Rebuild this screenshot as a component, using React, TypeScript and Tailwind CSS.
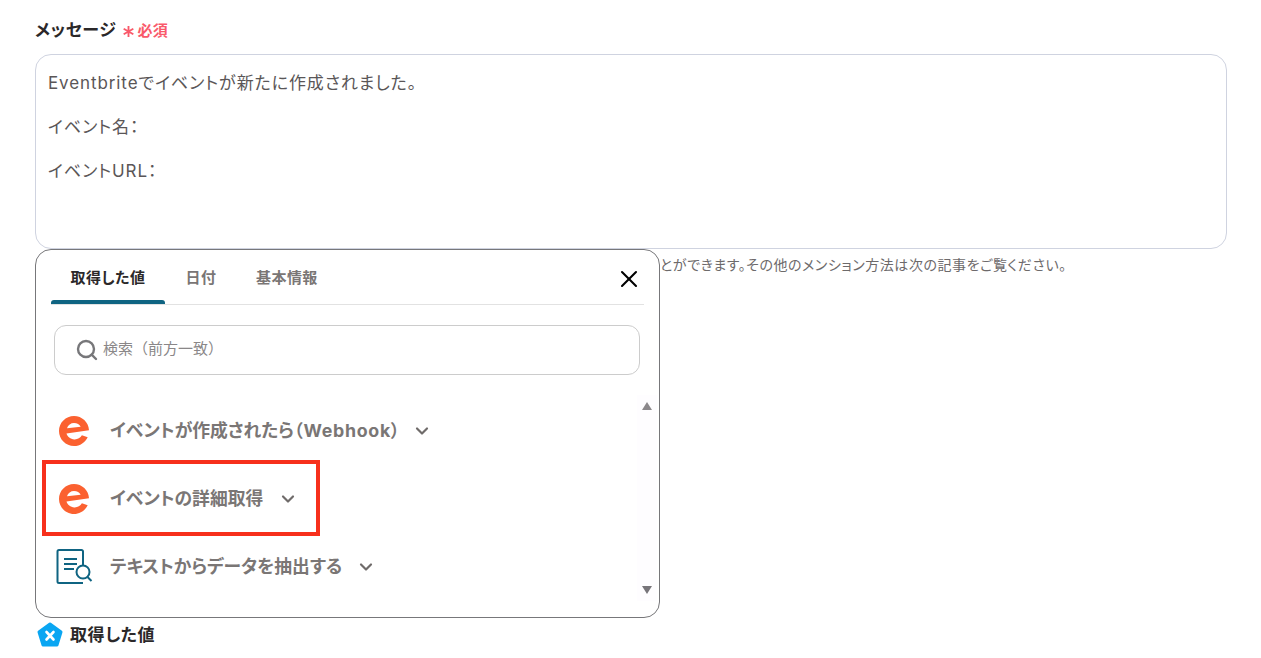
import { ChevronDown, Search, X } from "lucide-react";

function EventbriteLogo() {
  return (
    <svg width="32" height="32" viewBox="0 0 32 32" className="flex-none">
      <path
        d="M16 1C7.700 1 1 7.700 1 16s6.700 15 15 15c6.100 0 11.300-3.600 13.700-8.800l-5.800-1.900c-1.600 2.700-4.500 4.300-7.600 4.100-3.900-.2-6.800-2.600-7.800-5.900L31 15.200C30.600 7.200 24 1 16 1z"
        fill="#fb6130"
      />
      <path d="M9 13.200c1-3.200 3.800-5.200 7-5.200 3.100 0 5.600 1.700 6.700 3.800z" fill="#fff" />
    </svg>
  );
}

function DocSearchIcon() {
  return (
    <svg width="38" height="38" viewBox="0 0 38 38" fill="none" stroke="#0f6482" strokeWidth="2" className="flex-none">
      <path d="M28 35H4a1.500 1.500 0 0 1-1.500-1.500V3.500A1.500 1.500 0 0 1 4 2h22.500A1.500 1.500 0 0 1 28 3.500V17" />
      <path d="M9 11h13M9 16h13M9 21h10" />
      <circle cx="28" cy="24" r="6.500" />
      <path d="M32.500 29l4 4" />
    </svg>
  );
}

function Row({ icon, label, textWidth }: { icon: React.ReactNode; label: React.ReactNode; textWidth: string }) {
  return (
    <div className="flex h-[68px] items-center">
      <div className="flex w-[74px] flex-none justify-center pl-[2px]">{icon}</div>
      <span className={`text-[17.800px] leading-[24px] font-bold whitespace-nowrap text-[#7a7675] ${textWidth}`}>{label}</span>
      <ChevronDown size={20} strokeWidth={2.6} className="ml-[9px] flex-none text-[#6f6b6a]" />
    </div>
  );
}

export default function App() {
  return (
    <div className="relative h-[658px] w-[1261px] overflow-hidden bg-white px-[35px] pt-[19px] font-['Inter','Noto_Sans_CJK_JP',sans-serif] [font-feature-settings:'palt']">
      <div className="flex h-[24px] items-center">
        <span className="text-[17px] font-bold tracking-[0.6px] text-[#2b2829]">メッセージ</span>
        <svg width="13" height="13" viewBox="0 0 14 14" stroke="#f9596a" strokeWidth="2" className="ml-[5px] flex-none">
          <path d="M7 1v12M1.800 4l10.400 6M12.200 4 1.800 10" />
        </svg>
        <span className="ml-[3px] text-[15px] font-bold tracking-[0.3px] text-[#f9596a]">必須</span>
      </div>

      <div className="mt-[11px] flex h-[195px] w-[1192px] flex-col gap-[22px] rounded-[16px] border border-[#cfd3e0] px-[12px] pt-[17px] text-[17px] leading-[22px] tracking-[0.9px] text-[#5a5657]">
        <p>Eventbriteでイベントが新たに作成されました。</p>
        <p>イベント名：</p>
        <p>イベントURL：</p>
      </div>

      <p className="mt-[7px] pl-[625px] text-[14px] leading-[18px] tracking-[0.55px] text-[#6d6a6b]">
        とができます。その他のメンション方法は次の記事をご覧ください。
      </p>

      {/* mention popup */}
      <div className="absolute top-[249px] left-[35px] h-[369px] w-[625px] rounded-[16px] border border-[#77777a] bg-white">
        <div className="relative mx-[15px] flex h-[55px] border-b border-[#e2e2e2] pt-[17px] text-[15px] leading-[22px] font-bold tracking-[0.45px] text-[#7a7675]">
          <div className="relative w-[114px] text-center text-[#2b2829]">
            取得した値
            <span className="absolute right-0 bottom-0 left-0 h-[4px] rounded-t-[3px] bg-[#0f6482]" />
          </div>
          <div className="w-[72px] text-center">日付</div>
          <div className="ml-[19px]">基本情報</div>
          <X size={28} strokeWidth={1.8} className="absolute top-[15px] right-[1px] text-black" />
        </div>

        <div className="mx-[18px] mt-[20px] flex h-[50px] w-[586px] items-center rounded-[12px] border border-[#cccccc] pl-[20px]">
          <Search size={24} strokeWidth={2.400} className="text-[#77777a]" />
          <span className="mb-[2px] ml-[4px] text-[15px] leading-[20px] text-[#8a8788] [font-feature-settings:normal]">検索（前方一致）</span>
        </div>

        <div className="mt-[22px]">
          <Row
            icon={<EventbriteLogo />}
            label={
              <>
                イベントが作成されたら<span className="tracking-[0.7px]">（Webhook）</span>
              </>
            }
            textWidth="w-[293px]"
          />
          <Row icon={<EventbriteLogo />} label="イベントの詳細取得" textWidth="w-[159px]" />
          <Row icon={<DocSearchIcon />} label="テキストからデータを抽出する" textWidth="w-[237px]" />
        </div>

        <div className="absolute top-[145px] right-[2px] bottom-[16px] flex w-[20px] flex-col items-center justify-between bg-[#fefdff] py-[7px]">
          <span className="h-0 w-0 border-x-[5px] border-b-[8px] border-x-transparent border-b-[#8b888b]" />
          <span className="h-0 w-0 border-x-[5px] border-t-[8px] border-x-transparent border-t-[#77757a]" />
        </div>
      </div>

      {/* red annotation */}
      <div className="absolute top-[460px] left-[42px] h-[76px] w-[278px] border-[4px] border-[#f7301c]" />

      <div className="absolute top-[622px] left-[37px] flex items-center gap-[7px]">
        <svg width="26" height="26" viewBox="0 0 26 26" className="flex-none">
          <path d="M13 2 24 10 20 23H6L2 10z" fill="#0aa6f2" stroke="#0aa6f2" strokeWidth="3" strokeLinejoin="round" />
          <path d="M9.500 10l7 7.500M16.500 10l-7 7.500" stroke="#fff" strokeWidth="2.600" strokeLinecap="round" />
        </svg>
        <span className="mt-[1px] text-[17px] font-bold tracking-[0.6px] text-[#2b2829]">取得した値</span>
      </div>
    </div>
  );
}
